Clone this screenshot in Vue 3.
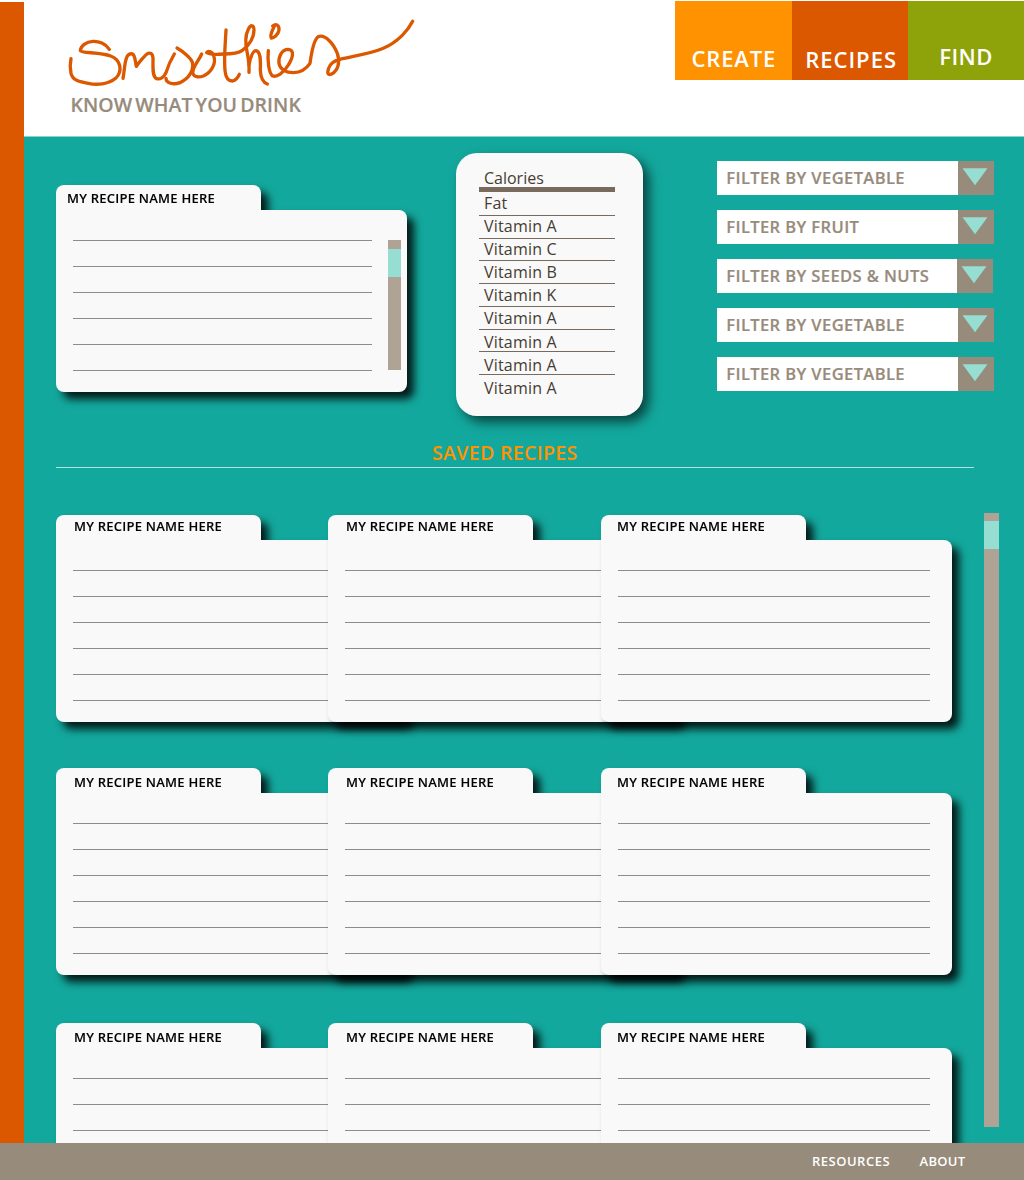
<script setup>
const nav = [
  { label: 'CREATE', key: 'create' },
  { label: 'RECIPES', key: 'recipes' },
  { label: 'FIND', key: 'find' },
]
const nutrients = ['Calories', 'Fat', 'Vitamin A', 'Vitamin C', 'Vitamin B', 'Vitamin K', 'Vitamin A', 'Vitamin A', 'Vitamin A', 'Vitamin A']
const filters = ['VEGETABLE', 'FRUIT', 'SEEDS & NUTS', 'VEGETABLE', 'VEGETABLE']
const savedRows = [1, 2, 3]
const savedCols = [1, 2, 3]
const rules = [1, 2, 3, 4, 5, 6]
</script>

<template>
  <div class="page">
    <div class="upper">
      <aside class="rail"></aside>
      <div class="column">
        <header class="header">
          <div class="brand">
            <svg class="logo" viewBox="0 0 1080 246" width="360" height="82" role="img" aria-label="Smoothies">
              <g fill="none" stroke="#db5800" stroke-width="10" stroke-linecap="round" stroke-linejoin="round">
                <path d="M148 118C137 101 116 93 99 94C78 95 62 108 61 122C64 130 120 126 152 138C184 150 188 185 167 205C145 223 110 226 85 220C60 216 38 212 33 190C30 175 30 160 33 146" />
                <path d="M189 205C194 180 193 155 202 138C208 130 218 128 222 138C228 150 226 160 229 169C236 158 255 135 264 130C278 126 280 140 279 155C279 175 277 200 290 206C300 209 312 202 318 188C325 165 332 150 343 132" />
                <path d="M351 114C370 125 395 145 398 160C400 185 385 205 360 218C340 225 318 220 318 205" />
                <path d="M425 132C415 155 398 170 398 190C402 200 415 203 430 198C455 188 468 160 462 140C458 125 445 120 440 128C450 134 470 134 490 132C515 132 535 130 547 121C570 106 582 80 582 60C582 45 572 42 565 58C556 75 555 100 562 130C566 150 568 170 567 187" />
                <path d="M498 60C496 100 493 130 494 160C494 195 500 214 518 213C530 210 534 202 538 193" />
                <path d="M567 165C572 140 578 122 588 122C602 124 602 150 601 180C602 205 610 218 622 222" />
                <path d="M625 122C622 150 626 190 638 198C650 202 670 190 685 165C698 145 705 120 685 118C665 118 655 140 657 160C660 180 680 188 700 188C725 187 740 175 750 160C754 130 760 90 775 80C795 72 820 100 832 130C840 155 836 180 815 192C805 196 800 192 806 175C810 160 822 152 840 148C880 138 930 132 970 115C1015 95 1045 60 1058 34" />
                <path d="M643 48C638 60 628 75 634 84C640 85 655 75 657 60C658 45 648 40 638 48" />
              </g>
            </svg>
            <p class="tagline">KNOW WHAT YOU DRINK</p>
          </div>
          <nav class="nav">
            <a v-for="item in nav" :key="item.key" :class="['nav-item', item.key]"><span>{{ item.label }}</span></a>
          </nav>
        </header>

        <main class="main">
          <section class="top">
            <article class="folder current">
              <h2 class="tab"><span>MY RECIPE NAME HERE</span></h2>
              <div class="sheet">
                <div class="lines"><i v-for="r in rules" :key="r"></i></div>
                <div class="scroll small"><div class="thumb"></div></div>
              </div>
            </article>

            <ul class="nutrition">
              <li v-for="(n, i) in nutrients" :key="i"><span>{{ n }}</span></li>
            </ul>

            <div class="filters">
              <div v-for="(f, i) in filters" :key="i" class="filter">
                <span class="filter-label">FILTER BY {{ f }}</span>
                <span class="filter-button">
                  <svg width="26" height="18" viewBox="0 0 26 18"><path d="M.5.3h25L13 17.3z" fill="#96ddd2" /></svg>
                </span>
              </div>
            </div>
          </section>

          <h1 class="saved-title"><span>SAVED RECIPES</span></h1>

          <section class="saved">
            <div class="board">
              <div v-for="row in savedRows" :key="row" class="row">
                <article v-for="col in savedCols" :key="col" class="folder">
                  <h2 class="tab"><span>MY RECIPE NAME HERE</span></h2>
                  <div class="sheet">
                    <div class="lines"><i v-for="r in rules" :key="r"></i></div>
                  </div>
                </article>
              </div>
            </div>
            <div class="scroll large"><div class="thumb"></div></div>
          </section>
        </main>
      </div>
    </div>
    <footer class="footer">
      <a class="resources">RESOURCES</a>
      <a class="about">ABOUT</a>
    </footer>
  </div>
</template>

<style>
body {
  margin: 0;
}
</style>

<style scoped>
* {
  box-sizing: border-box;
}
.page {
  width: 1024px;
  height: 1180px;
  overflow: hidden;
  font-family: 'Open Sans', 'Noto Sans', sans-serif;
  background: #fff;
}
.upper {
  display: flex;
  height: 1143px;
}
.rail {
  width: 23.6px;
  margin-top: 1.5px;
  background: #db5800;
}
.column {
  flex: 1;
  display: flex;
  flex-direction: column;
  min-width: 0;
}
h1, h2, p, ul {
  margin: 0;
  padding: 0;
}
.tagline,
.nav-item,
.tab,
.filter-label,
.saved-title,
.footer {
  font-weight: 600;
}
.tagline,
.filter-label {
  -webkit-text-stroke: 0.2px currentColor;
}
.tab {
  -webkit-text-stroke: 0.1px currentColor;
}

.header {
  height: 137px;
  flex: none;
  display: flex;
  justify-content: space-between;
  background: #fff;
  border-bottom: 1px solid #8ad3cd;
}
.brand {
  padding: 10px 0 0 36.4px;
}
.logo {
  display: block;
}
.tagline {
  padding-left: 10.5px;
  font-size: 19.5px;
  line-height: 26px;
  letter-spacing: 0.05px;
  word-spacing: -2px;
  white-space: nowrap;
  color: #978b7b;
}
.nav {
  display: flex;
  padding-top: 0.6px;
}
.nav-item {
  width: 116.2px;
  height: 79px;
  font-size: 22px;
  line-height: 30px;
  color: #fff;
}
.create {
  background: #ff9200;
  padding: 42px 0 0 16px;
  letter-spacing: 0.85px;
}
.recipes {
  background: #db5800;
  padding: 43px 0 0 13.5px;
  letter-spacing: 1px;
}
.find {
  background: #8ea209;
  padding: 40px 0 0 31.5px;
  letter-spacing: 0.4px;
}

.main {
  flex: 1;
  min-height: 0;
  overflow: hidden;
  background: #13a89d;
  padding-left: 32.4px;
}
.top {
  display: flex;
  height: 301px;
}

.folder {
  width: 351.5px;
  height: 207px;
  flex: none;
  filter: drop-shadow(7px 7px 4.5px rgba(0, 0, 0, 0.85));
}
.tab {
  width: 205.5px;
  height: 26px;
  padding-left: 18px;
  border-radius: 8px 8px 0 0;
  background: #f9f9f9;
  font-size: 13px;
  letter-spacing: 0.24px;
  line-height: 26px;
  white-space: nowrap;
  color: #000;
}
.sheet {
  display: flex;
  height: 182px;
  margin-top: -1px;
  padding: 30px 6px 0 17px;
  border-radius: 0 8px 8px 8px;
  background: #f9f9f9;
}
.lines {
  width: 312px;
}
.lines i {
  display: block;
  height: 26px;
  border-top: 1px solid #8c8c8c;
}
.current {
  margin-top: 48px;
}
.current .tab {
  padding-left: 11px;
}
.current .lines {
  width: 299px;
  margin-right: 16px;
}
.scroll {
  background: #afa396;
}
.thumb {
  background: #96ddd2;
}
.small {
  width: 13.3px;
  height: 130px;
  padding-top: 8.7px;
}
.small .thumb {
  height: 28px;
}

.nutrition {
  width: 187px;
  height: 263px;
  margin: 16px 0 0 48.5px;
  padding: 15px 28px 0 23px;
  border-radius: 21px;
  background: #f9f9f9;
  box-shadow: 6px 6px 12px rgba(0, 0, 0, 0.6);
  list-style: none;
  font-size: 16px;
  letter-spacing: 0.2px;
  line-height: 20px;
  color: #463c32;
}
.nutrition li {
  height: 23px;
  padding: 0 0 0 5px;
  border-bottom: 1px solid #786a5c;
  white-space: nowrap;
}
.nutrition li:first-child {
  height: 24px;
  border-bottom-width: 5px;
  letter-spacing: 0;
}
.nutrition li:nth-child(2) {
  height: 24px;
  padding-top: 1px;
}
.nutrition li:nth-child(4),
.nutrition li:nth-child(8) {
  height: 22px;
}
.nutrition li:nth-child(n + 5) {
  padding-top: 1px;
}
.nutrition li:nth-child(8) {
  padding-top: 2px;
}
.nutrition li:nth-child(n + 9) {
  padding-top: 3px;
}
.nutrition li:last-child {
  border-bottom: 0;
}

.filters {
  margin: 24px 0 0 74.3px;
  display: flex;
  flex-direction: column;
  gap: 15px;
}
.filter {
  display: flex;
  width: 276.5px;
  height: 34px;
}
.filter-label {
  width: 241px;
  padding-left: 9px;
  background: #fff;
  font-size: 16.5px;
  letter-spacing: 0.4px;
  line-height: 34px;
  white-space: nowrap;
  color: #978b7b;
}
.filter-button {
  width: 35.5px;
  padding: 6.8px 0 0 4px;
  background: #978b7b;
}
.filter-button svg {
  display: block;
}
.filter:nth-child(3) {
  width: 275.5px;
}
.filter:nth-child(3) .filter-label {
  width: 240.2px;
}

.saved-title {
  width: 918px;
  height: 30px;
  border-bottom: 1px solid #b0e2dc;
  padding-left: 376px;
  font-size: 19.5px;
  letter-spacing: 0.34px;
  line-height: 30px;
  white-space: nowrap;
  color: #ff9200;
}

.saved {
  display: flex;
  padding-top: 45px;
}
.board {
  width: 928.5px;
  padding-top: 2px;
  flex: none;
}
.row {
  display: grid;
  grid-template-columns: 272px 273px 351.5px;
  height: 253px;
}
.row:nth-child(2) {
  height: 255px;
}
.row:first-child .tab {
  line-height: 23px;
}
.row:nth-child(n + 2) .tab {
  line-height: 28px;
}
.row .folder:last-child .tab {
  padding-left: 16px;
}
.large {
  width: 15px;
  height: 614px;
  padding-top: 8px;
}
.large .thumb {
  height: 28px;
}

.footer {
  display: flex;
  height: 37px;
  padding-left: 812px;
  background: #978b7b;
  color: #fff;
  font-size: 13px;
  letter-spacing: 0.5px;
  line-height: 37px;
}
.resources {
  width: 107.5px;
}
.about {
  letter-spacing: 0.3px;
}
</style>
